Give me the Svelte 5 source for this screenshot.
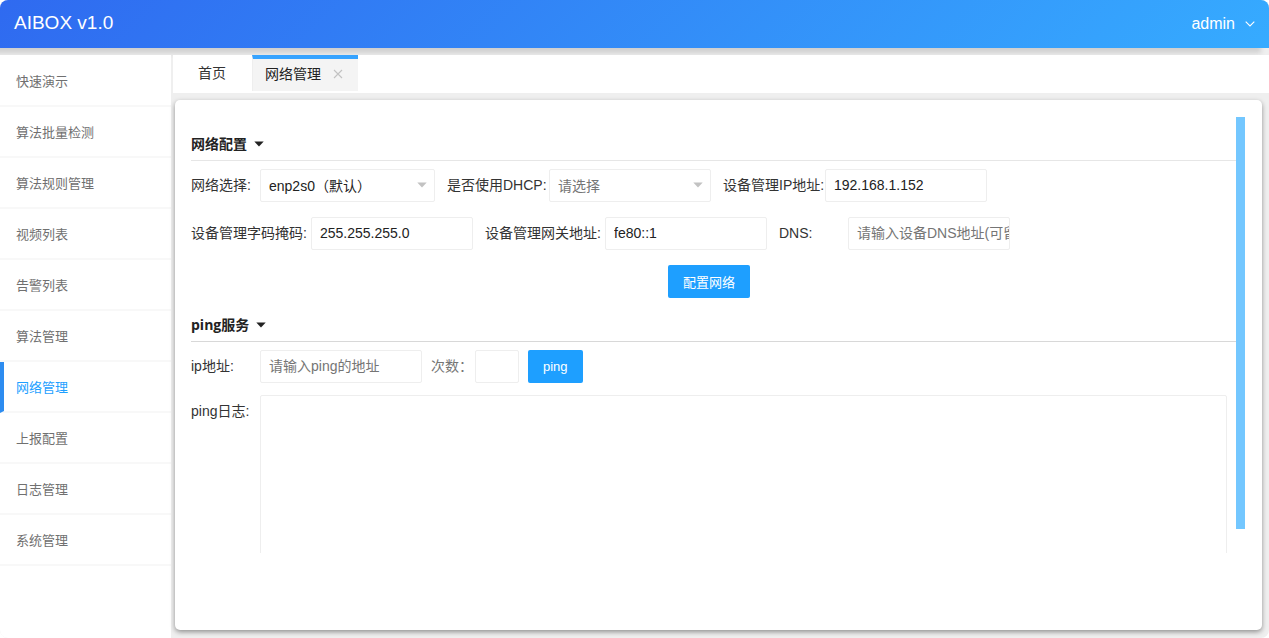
<script>
	const menu = [
		"快速演示",
		"算法批量检测",
		"算法规则管理",
		"视频列表",
		"告警列表",
		"算法管理",
		"网络管理",
		"上报配置",
		"日志管理",
		"系统管理"
	];

	let active = $state("网络管理");
	let iface = $state("enp2s0");
	let dhcp = $state("");
	let ip = $state("192.168.1.152");
	let mask = $state("255.255.255.0");
	let gateway = $state("fe80::1");
	let dns = $state("");
	let pingAddress = $state("");
	let pingCount = $state("");
	let pingLog = $state("");
</script>

{#snippet caret()}
	<svg class="caret" width="10" height="6" viewBox="0 0 10 6" aria-hidden="true">
		<path d="M0.3 0.5h9.4L5 5.4z" fill="currentColor" />
	</svg>
{/snippet}

<div class="app">
	<header class="header">
		<h1 class="brand">AIBOX v1.0</h1>
		<button class="user" type="button">
			admin
			<svg width="10" height="6" viewBox="0 0 10 6" aria-hidden="true">
				<path d="M0.7 0.7L5 5l4.3-4.3" fill="none" stroke="currentColor" stroke-width="1.1" />
			</svg>
		</button>
	</header>

	<div class="body">
		<nav class="sidebar">
			{#each menu as item}
				<a
					class="menu-item"
					class:is-active={item === active}
					href="#{item}"
					onclick={() => (active = item)}>{item}</a
				>
			{/each}
		</nav>

		<main class="main">
			<div class="tabs">
				<button class="tab" type="button">首页</button>
				<div class="tab is-active">
					<span>网络管理</span>
					<button class="tab-close" type="button" aria-label="关闭">
						<svg width="10" height="10" viewBox="0 0 10 10" aria-hidden="true">
							<path d="M1 1l8 8M9 1L1 9" fill="none" stroke="currentColor" stroke-width="1.1" />
						</svg>
					</button>
				</div>
			</div>

			<section class="panel">
				<div class="viewport">
					<h2 class="heading heading--first">网络配置 {@render caret()}</h2>
					<form class="form" onsubmit={(e) => e.preventDefault()}>
						<div class="row">
							<div class="field">
								<label class="label label--sm" for="iface">网络选择:</label>
								<div class="select select--wide">
									<select id="iface" bind:value={iface}>
										<option value="enp2s0">enp2s0（默认）</option>
									</select>
									{@render caret()}
								</div>
							</div>
							<div class="field">
								<label class="label label--md" for="dhcp">是否使用DHCP:</label>
								<div class="select">
									<select id="dhcp" class:is-empty={!dhcp} bind:value={dhcp}>
										<option value="">请选择</option>
										<option value="yes">是</option>
										<option value="no">否</option>
									</select>
									{@render caret()}
								</div>
							</div>
							<div class="field">
								<label class="label label--md" for="ip">设备管理IP地址:</label>
								<input id="ip" class="input" type="text" bind:value={ip} />
							</div>
						</div>
						<div class="row">
							<div class="field">
								<label class="label label--lg" for="mask">设备管理字码掩码:</label>
								<input id="mask" class="input" type="text" bind:value={mask} />
							</div>
							<div class="field">
								<label class="label label--lg" for="gateway">设备管理网关地址:</label>
								<input id="gateway" class="input" type="text" bind:value={gateway} />
							</div>
							<div class="field">
								<label class="label label--sm" for="dns">DNS:</label>
								<input
									id="dns"
									class="input"
									type="text"
									placeholder="请输入设备DNS地址(可留空)"
									bind:value={dns}
								/>
							</div>
						</div>
						<div class="row row--center">
							<button class="btn" type="submit">配置网络</button>
						</div>
					</form>

					<h2 class="heading">ping服务 {@render caret()}</h2>
					<form class="form" onsubmit={(e) => e.preventDefault()}>
						<div class="row row--ping">
							<div class="field">
								<label class="label label--sm" for="ping-address">ip地址:</label>
								<input
									id="ping-address"
									class="input"
									type="text"
									placeholder="请输入ping的地址"
									bind:value={pingAddress}
								/>
							</div>
							<div class="field">
								<label class="label label--count" for="ping-count">次数：</label>
								<input id="ping-count" class="input input--count" type="text" bind:value={pingCount} />
							</div>
							<button class="btn" type="submit">ping</button>
						</div>
						<div class="log">
							<label class="label label--sm" for="ping-log">ping日志:</label>
							<textarea id="ping-log" class="textarea" readonly bind:value={pingLog}></textarea>
						</div>
					</form>
				</div>
				<div class="scrollbar"><div class="thumb"></div></div>
			</section>
		</main>
	</div>
</div>

<style>
	:global(body) {
		background: #fff;
	}

	.app {
		display: flex;
		flex-direction: column;
		height: 100vh;
		overflow: hidden;
		border-radius: 8px;
		background: #efefef;
		font-family: "Liberation Sans", "Noto Sans CJK SC", sans-serif;
		font-size: 14px;
		color: #333;
	}

	.app * {
		box-sizing: border-box;
	}

	button,
	input,
	select,
	textarea {
		margin: 0;
		font: inherit;
	}

	.header {
		display: flex;
		align-items: center;
		justify-content: space-between;
		flex: 0 0 48px;
		padding: 0 14px;
		background: linear-gradient(135deg, #2f6af0, #36abff);
		box-shadow: -8px 5px 5px #cfcfcf;
		color: #fff;
	}

	.brand {
		margin: 0;
		padding-bottom: 3px;
		font-size: 19px;
		font-weight: 400;
	}

	.user {
		display: flex;
		align-items: center;
		gap: 10px;
		padding: 0;
		border: 0;
		background: none;
		color: inherit;
		font-size: 16px;
	}

	.body {
		display: flex;
		flex: 1;
		min-height: 0;
		margin-top: 7px;
	}

	.sidebar {
		flex: 0 0 171px;
		padding-top: 1px;
		background: #fff;
	}

	.menu-item {
		display: block;
		height: 51px;
		padding-left: 16px;
		border-bottom: 2px solid #f8f8f8;
		line-height: 52px;
		font-size: 13px;
		color: #707070;
		text-decoration: none;
	}

	.menu-item.is-active {
		padding-left: 12px;
		border-left: 4px solid #2d8cf0;
		color: #1e9fff;
	}

	.main {
		display: flex;
		flex: 1;
		flex-direction: column;
		min-width: 0;
		padding-left: 2px;
	}

	.tabs {
		display: flex;
		flex: 0 0 38px;
		background: #fff;
	}

	.tab {
		display: flex;
		align-items: center;
		height: 36px;
		padding: 0 26px 2px 25px;
		border: 0;
		background: none;
		color: #333;
		font-size: 14px;
	}

	.tab.is-active {
		gap: 12px;
		padding: 0 15px 4px 12px;
		border-top: 4px solid #36a3ff;
		border-left: 1px solid #eee;
		background: #f4f4f4;
		color: #222;
	}

	.tab-close {
		display: flex;
		padding: 2px 0 0;
		border: 0;
		background: none;
		color: #c2c2c2;
	}

	.panel {
		display: flex;
		flex: 1;
		min-height: 0;
		margin: 7px 7px 8px 2px;
		padding: 17px 17px 77px 16px;
		border-radius: 5px;
		background: #fff;
		box-shadow: 0 2px 5px rgba(0, 0, 0, 0.4);
	}

	.viewport {
		flex: 1;
		min-width: 0;
		overflow: hidden;
	}

	.scrollbar {
		flex: 0 0 9px;
	}

	.thumb {
		height: calc(100% - 24px);
		background: #73c7ff;
	}

	.heading {
		display: flex;
		align-items: center;
		gap: 7px;
		margin: 12px 0 8px;
		padding-bottom: 1px;
		border-bottom: 1px solid #d8d8d8;
		line-height: 30px;
		font-family: "Open Sans", "Noto Sans CJK SC", sans-serif;
		font-size: 14px;
		font-weight: 700;
		color: #222;
	}

	.heading--first {
		margin-top: 0;
		padding-top: 12px;
		border-bottom-color: #e6e6e6;
	}

	.form {
		margin-right: 9px;
	}

	.row {
		display: flex;
		gap: 12px;
		margin-bottom: 15px;
	}

	.row--center {
		justify-content: center;
		margin-bottom: 0;
	}

	.row--ping {
		gap: 9px;
		margin-bottom: 12px;
	}

	.field,
	.log {
		display: flex;
	}

	.label {
		flex: none;
		line-height: 32px;
		white-space: nowrap;
	}

	.label--sm {
		width: 69px;
	}

	.label--md {
		width: 102px;
	}

	.label--lg {
		width: 120px;
	}

	.label--count {
		width: 44px;
		color: #757575;
	}

	.input,
	.select select,
	.textarea {
		border: 1px solid #eee;
		border-radius: 2px;
		background: #fff;
		color: #222;
		outline: none;
	}

	.input {
		width: 162px;
		height: 33px;
		padding: 0 0 1px 8px;
	}

	.input--count {
		width: 44px;
	}

	.input::placeholder {
		color: #757575;
	}

	.select {
		position: relative;
		width: 162px;
	}

	.select--wide {
		width: 175px;
	}

	.select select {
		width: 100%;
		height: 33px;
		padding: 0 24px 0 8px;
		appearance: none;
	}

	.select select.is-empty {
		color: #757575;
	}

	.select .caret {
		position: absolute;
		top: 13px;
		right: 8px;
		color: #c2c2c2;
		pointer-events: none;
	}

	.btn {
		height: 33px;
		padding: 0 15px;
		border: 0;
		border-radius: 2px;
		background: #1e9fff;
		color: #fff;
		font-size: 13px;
		white-space: nowrap;
	}

	.textarea {
		flex: 1;
		height: 184px;
		padding: 6px 9px;
		resize: none;
	}
</style>
